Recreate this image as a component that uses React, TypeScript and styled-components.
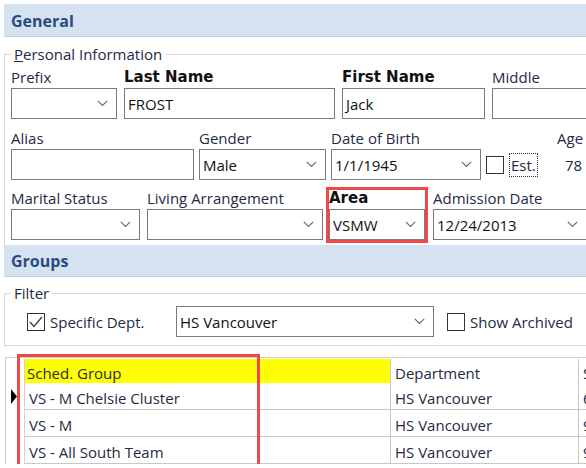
import React from "react";
import styled, { createGlobalStyle } from "styled-components";

const GlobalStyle = createGlobalStyle`
  html, body {
    margin: 0;
    padding: 0;
    background: #fff;
    overflow: hidden;
  }
  body {
    font-family: "Open Sans", "Noto Sans", sans-serif;
    font-size: 15px;
    color: #1f2a44;
  }
  * { box-sizing: border-box; }
`;

const Page = styled.div`
  width: 640px;
  padding: 4px 0 0 4px;
`;

const SectionBand = styled.div<{ $h: number }>`
  height: ${(p) => p.$h}px;
  background: #d5e2f1;
  border-bottom: 1px solid #bdd0e7;
  padding: 1px 0 0 7px;
  display: flex;
  align-items: center;
  font-weight: 700;
  font-size: 16px;
  color: #2a4b80;
`;

const GroupBox = styled.fieldset<{ $top: number; $open?: boolean; $bottom: number; $pad: number }>`
  margin: ${(p) => p.$top}px 0 0 0;
  padding: ${(p) => p.$pad}px 0 ${(p) => p.$bottom}px 6px;
  border: 1px solid #d9d9d9;
  border-right: none;
  border-bottom: ${(p) => (p.$open ? "none" : "1px solid #d9d9d9")};
  min-width: 0;
`;

const Legend = styled.legend`
  margin: 0;
  padding: 0 3px;
  line-height: 18px;
  font-size: 15px;
  color: #1f2a44;
`;

const FormRow = styled.div<{ $top?: number }>`
  display: flex;
  align-items: flex-end;
  margin-top: ${(p) => p.$top ?? 0}px;
`;

const Field = styled.div<{ $w: number; $gap?: number }>`
  flex: none;
  display: flex;
  flex-direction: column;
  width: ${(p) => p.$w}px;
  margin-left: ${(p) => p.$gap ?? 0}px;
`;

const AnnotatedField = styled(Field)`
  position: relative;
  &::after {
    content: "";
    position: absolute;
    left: -3px;
    right: -3px;
    top: -1px;
    bottom: -3px;
    border: 3px solid #f04848;
    pointer-events: none;
  }
`;

const Label = styled.div<{ $bold?: boolean }>`
  height: 19px;
  line-height: 20px;
  margin-bottom: 2px;
  white-space: nowrap;
  font-family: ${(p) => (p.$bold ? `"DejaVu Sans", "Verdana", sans-serif` : "inherit")};
  font-weight: ${(p) => (p.$bold ? 700 : 400)};
  color: ${(p) => (p.$bold ? "#111" : "#1f2a44")};
  font-size: 15px;
`;

const InputBox = styled.div<{ $w?: number }>`
  flex: none;
  height: 31px;
  ${(p) => (p.$w ? `width: ${p.$w}px;` : "")}
  border: 1px solid #7a7a7a;
  background: #fff;
  display: flex;
  align-items: center;
  justify-content: space-between;
  padding: 0 8px 0 3px;
  color: #111;
  white-space: nowrap;
`;

const ValueBox = styled.div`
  height: 31px;
  display: flex;
  align-items: center;
  padding-left: 8px;
  color: #1f2a44;
`;

const CheckRow = styled.div`
  height: 31px;
  display: flex;
  align-items: center;
`;

const CheckSquare = styled.span`
  flex: none;
  width: 18px;
  height: 18px;
  border: 1px solid #333;
  background: #fff;
  display: flex;
  align-items: center;
  justify-content: center;
`;

const FocusLabel = styled.span`
  margin-left: 5px;
  height: 24px;
  padding: 0 1px;
  border: 1px dotted #333;
  display: flex;
  align-items: center;
`;

const FilterRow = styled.div`
  display: flex;
  align-items: center;
  height: 31px;
  padding-left: 16px;
`;

const CheckText = styled.span<{ $w?: number }>`
  margin-left: 5px;
  ${(p) => (p.$w ? `width: ${p.$w}px;` : "")}
  white-space: nowrap;
`;

const Spacer = styled.span<{ $w: number }>`
  flex: none;
  width: ${(p) => p.$w}px;
`;

const DataGrid = styled.div`
  position: relative;
  margin: 11px 0 0 1px;
  border-top: 1px solid #cfcfcf;
  border-left: 1px solid #cfcfcf;
  padding-top: 1px;
  display: grid;
  grid-template-columns: 19px 366px 188px 80px;
  grid-auto-rows: 27px;
  grid-template-rows: 24px;
`;

const GridOverlay = styled.div`
  position: absolute;
  left: 11px;
  top: -4px;
  width: 243px;
  height: 113px;
  border: 3px solid #f04848;
  pointer-events: none;
`;

const RowHead = styled.div`
  border-right: 1px solid #d0d0d0;
  display: flex;
  align-items: center;
  padding-left: 5px;
`;

const Cell = styled.div<{ $header?: boolean; $highlight?: boolean; $last?: boolean }>`
  display: flex;
  align-items: center;
  padding: 3px 0 0 ${(p) => (p.$highlight ? 2 : 4)}px;
  white-space: nowrap;
  overflow: hidden;
  background: ${(p) => (p.$highlight ? "#ffff00" : "#fff")};
  border-right: ${(p) => (p.$last ? "none" : "1px solid #c8c8c8")};
  border-bottom: ${(p) => (p.$header ? "none" : "1px solid #c8c8c8")};
  color: #1f2a44;
`;

const Chevron = () => (
  <svg width="11" height="7" viewBox="0 0 11 7">
    <polyline points="0.8,0.8 5.5,5.5 10.2,0.8" fill="none" stroke="#666" strokeWidth="1.1" />
  </svg>
);

const Tick = () => (
  <svg width="16" height="16" viewBox="0 0 16 16">
    <polyline points="2,8 6,12.5 14,3" fill="none" stroke="#444" strokeWidth="1.4" />
  </svg>
);

const RowPointer = () => (
  <svg width="6" height="15" viewBox="0 0 6 15">
    <polygon points="0,0 6,7.5 0,15" fill="#000" />
  </svg>
);

interface ComboProps {
  value?: string;
  w?: number;
}

const Combo: React.FC<ComboProps> = ({ value, w }) => (
  <InputBox $w={w}>
    <span>{value}</span>
    <Chevron />
  </InputBox>
);

const groups = [
  { name: "VS - M Chelsie Cluster", dept: "HS Vancouver", extra: "6" },
  { name: "VS - M", dept: "HS Vancouver", extra: "9" },
  { name: "VS - All South Team", dept: "HS Vancouver", extra: "9" },
];

export default function App() {
  return (
    <>
      <GlobalStyle />
      <Page>
        <SectionBand $h={33}>General</SectionBand>

        <GroupBox $top={8} $pad={4} $bottom={5} $open>
          <Legend>
            <u>P</u>ersonal Information
          </Legend>
          <FormRow>
            <Field $w={106}>
              <Label>Prefix</Label>
              <Combo />
            </Field>
            <Field $w={211} $gap={7}>
              <Label $bold>Last Name</Label>
              <InputBox>FROST</InputBox>
            </Field>
            <Field $w={143} $gap={7}>
              <Label $bold>First Name</Label>
              <InputBox>Jack</InputBox>
            </Field>
            <Field $w={120} $gap={7}>
              <Label>Middle</Label>
              <InputBox />
            </Field>
          </FormRow>

          <FormRow $top={9}>
            <Field $w={183}>
              <Label>Alias</Label>
              <InputBox />
            </Field>
            <Field $w={127} $gap={5}>
              <Label>Gender</Label>
              <Combo value="Male" />
            </Field>
            <Field $w={150} $gap={5}>
              <Label>Date of Birth</Label>
              <Combo value="1/1/1945" />
            </Field>
            <Field $w={52} $gap={5}>
              <CheckRow>
                <CheckSquare />
                <FocusLabel>Est.</FocusLabel>
              </CheckRow>
            </Field>
            <Field $w={40} $gap={19}>
              <Label>Age</Label>
              <ValueBox>78</ValueBox>
            </Field>
          </FormRow>

          <FormRow $top={8}>
            <Field $w={129}>
              <Label>Marital Status</Label>
              <Combo />
            </Field>
            <Field $w={176} $gap={7}>
              <Label>Living Arrangement</Label>
              <Combo />
            </Field>
            <AnnotatedField $w={96} $gap={6}>
              <Label $bold>Area</Label>
              <Combo value="VSMW" />
            </AnnotatedField>
            <Field $w={154} $gap={8}>
              <Label>Admission Date</Label>
              <Combo value="12/24/2013" />
            </Field>
          </FormRow>
        </GroupBox>

        <SectionBand $h={32}>Groups</SectionBand>

        <GroupBox $top={7} $pad={4} $bottom={8}>
          <Legend>Filter</Legend>
          <FilterRow>
            <CheckSquare>
              <Tick />
            </CheckSquare>
            <CheckText $w={126}>Specific Dept.</CheckText>
            <Combo value="HS Vancouver" w={258} />
            <Spacer $w={13} />
            <CheckSquare />
            <CheckText>Show Archived</CheckText>
          </FilterRow>
        </GroupBox>

        <DataGrid>
          <RowHead />
          <Cell $header $highlight>Sched. Group</Cell>
          <Cell $header>Department</Cell>
          <Cell $header $last>S</Cell>
          {groups.map((g, i) => (
            <React.Fragment key={g.name}>
              <RowHead>{i === 0 && <RowPointer />}</RowHead>
              <Cell>{g.name}</Cell>
              <Cell>{g.dept}</Cell>
              <Cell $last>{g.extra}</Cell>
            </React.Fragment>
          ))}
          <GridOverlay />
        </DataGrid>
      </Page>
    </>
  );
}
